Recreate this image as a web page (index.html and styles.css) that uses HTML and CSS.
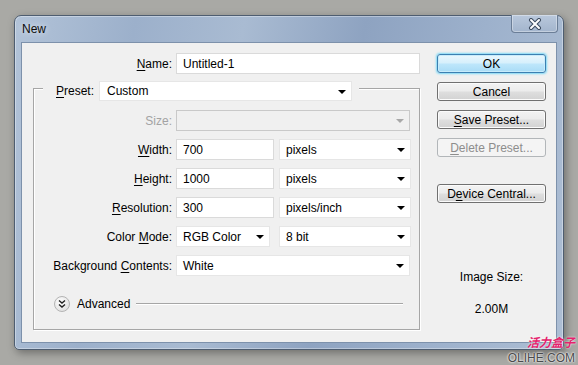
FILE: index.html
```html
<!DOCTYPE html>
<html lang="en">
<head>
  <meta charset="UTF-8">
  <title>New</title>
  <link rel="stylesheet" href="styles.css">
</head>
<body>
  <div class="window">
    <div class="titlebar">
      <span class="title">New</span>
      <div class="close">
        <svg width="14" height="12" viewBox="0 0 14 12">
          <path d="M3 2 L11 10 M11 2 L3 10" stroke="#3b4a5e" stroke-width="4" stroke-linecap="round"/>
          <path d="M3 2 L11 10 M11 2 L3 10" stroke="#ffffff" stroke-width="2" stroke-linecap="round"/>
        </svg>
      </div>
    </div>

    <div class="content">
      <div class="form">
        <div class="row name-row">
          <label class="lbl"><u>N</u>ame:</label>
          <div class="field name">Untitled-1</div>
        </div>

        <div class="group">
          <div class="preset-row">
            <label><u>P</u>reset:</label>
            <div class="select preset">Custom<i class="arrow"></i></div>
          </div>

          <div class="rows">
            <div class="row">
              <label class="lbl off">Size:</label>
              <div class="select full disabled"><i class="arrow"></i></div>
            </div>
            <div class="row">
              <label class="lbl"><u>W</u>idth:</label>
              <div class="field num">700</div>
              <div class="select unit">pixels<i class="arrow"></i></div>
            </div>
            <div class="row">
              <label class="lbl"><u>H</u>eight:</label>
              <div class="field num">1000</div>
              <div class="select unit">pixels<i class="arrow"></i></div>
            </div>
            <div class="row">
              <label class="lbl"><u>R</u>esolution:</label>
              <div class="field num">300</div>
              <div class="select unit">pixels/inch<i class="arrow"></i></div>
            </div>
            <div class="row">
              <label class="lbl">Color <u>M</u>ode:</label>
              <div class="select mode">RGB Color<i class="arrow"></i></div>
              <div class="select unit bits">8 bit<i class="arrow"></i></div>
            </div>
            <div class="row">
              <label class="lbl">Background <u>C</u>ontents:</label>
              <div class="select full">White<i class="arrow"></i></div>
            </div>
          </div>

          <div class="advanced">
            <span class="toggle">
              <svg width="16" height="16" viewBox="0 0 16 16">
                <path d="M5 4.5 L8 7 L11 4.5 M5 8.5 L8 11 L11 8.5" fill="none" stroke="#222" stroke-width="1.4"/>
              </svg>
            </span>
            <span>Advanced</span>
            <span class="rule"></span>
          </div>
        </div>
      </div>

      <div class="side">
        <div class="btn default">OK</div>
        <div class="btn">Cancel</div>
        <div class="btn"><u>S</u>ave Preset...</div>
        <div class="btn disabled"><u>D</u>elete Preset...</div>
        <div class="btn central">D<u>e</u>vice Central...</div>
        <div class="size-label">Image Size:</div>
        <div class="size-value">2.00M</div>
      </div>
    </div>
  </div>

  <div class="watermark">
    <div class="cn">活力盒子</div>
    <div class="en">OLIHE.COM</div>
  </div>
</body>
</html>
```

FILE: styles.css
```css
body {
  margin: 0;
  padding: 15px 0 0 14px;
  background: #a9a9a5;
  font-family: "Liberation Sans", Arial, sans-serif;
  font-size: 12px;
  color: #000;
  height: 365px;
  box-sizing: border-box;
  overflow: hidden;
}
u {
  text-decoration-thickness: 1px;
  text-underline-offset: 2px;
}

.window {
  width: 550px;
  height: 335px;
  box-sizing: border-box;
  border: 1px solid #4e5d70;
  border-radius: 7px 7px 5px 5px;
  background: linear-gradient(100deg, #b2c3d8 0%, #9cb0cb 20%, #a9bbd2 38%, #8ea3c1 58%, #9db1cc 78%, #adbed4 100%);
  box-shadow: 2px 3px 8px rgba(0, 0, 0, 0.35), inset 0 0 0 1px rgba(255, 255, 255, 0.35);
}
.titlebar {
  height: 26px;
  display: flex;
  justify-content: space-between;
  align-items: flex-start;
  padding: 0 5px 0 7px;
}
.title {
  margin-top: 6px;
  font-size: 12px;
  color: #0c0c0c;
  text-shadow: 0 0 6px rgba(255, 255, 255, 0.8);
}
.close {
  width: 45px;
  height: 17px;
  margin-top: -1px;
  border: 1px solid #6b7e97;
  border-top: none;
  border-radius: 0 0 4px 4px;
  background: linear-gradient(#b9c8dc, #a3b5cd);
  box-shadow: inset 0 0 0 1px rgba(255, 255, 255, 0.35);
  display: flex;
  align-items: center;
  justify-content: center;
}

.content {
  margin: 0 6px;
  height: 301px;
  box-sizing: border-box;
  border: 1px solid #7d91ab;
  background: #f0f0f0;
  display: flex;
}

.form {
  margin-left: 11px;
  width: 387px;
}
.row {
  display: flex;
  align-items: center;
  height: 21px;
}
.name-row {
  margin-top: 10px;
}
.lbl {
  width: 138px;
  text-align: right;
  margin-right: 4px;
  white-space: nowrap;
}
.name-row .lbl {
  width: 139px;
}
.lbl.off {
  color: #a3a3a3;
}

.field, .select {
  height: 21px;
  box-sizing: border-box;
  border: 1px solid #dadada;
  background: #fff;
  padding-left: 6px;
  display: flex;
  align-items: center;
  white-space: nowrap;
}
.field.name {
  width: 244px;
}
.field.num {
  width: 98px;
}
.select {
  position: relative;
  border-color: #e6e6e6;
}
.select .arrow {
  position: absolute;
  right: 5px;
  top: 8px;
  width: 0;
  height: 0;
  border-left: 4px solid transparent;
  border-right: 4px solid transparent;
  border-top: 4px solid #000;
}
.select.preset {
  width: 253px;
  height: 20px;
  padding-left: 7px;
}
.select.full {
  width: 234px;
}
.select.unit {
  width: 132px;
  margin-left: 5px;
}
.select.mode {
  width: 94px;
}
.select.bits {
  margin-left: 9px;
}
.select.disabled {
  background: #f0f0f0;
  border-color: #c9c9c9;
}
.select.disabled .arrow {
  border-top-color: #a8a8a8;
}

.group {
  margin-top: 14px;
  height: 242px;
  box-sizing: border-box;
  border: 1px solid #a6a6a6;
  box-shadow: 1px 1px 0 #fff, inset 1px 1px 0 #fff;
}
.preset-row {
  display: flex;
  width: fit-content;
  align-items: center;
  margin: -8px 0 0 9px;
  padding: 0 7px 0 13px;
  background: #f0f0f0;
  height: 20px;
}
.preset-row label {
  margin-right: 5px;
}
.rows {
  margin-top: 9px;
  display: flex;
  flex-direction: column;
  gap: 8px;
}

.advanced {
  display: flex;
  align-items: center;
  margin: 20px 16px 0 20px;
  height: 16px;
}
.toggle {
  width: 16px;
  height: 16px;
  box-sizing: border-box;
  border: 1px solid #b4b4b4;
  border-radius: 50%;
  background: radial-gradient(circle at 40% 35%, #ffffff, #e4e4e4 70%, #d2d2d2);
  margin-right: 7px;
  display: flex;
}
.toggle svg {
  margin: -1px;
}
.rule {
  flex: 1;
  margin-left: 6px;
  border-top: 1px solid #a6a6a6;
  border-bottom: 1px solid #fff;
}

.side {
  margin-left: 17px;
  width: 109px;
  padding-top: 11px;
  display: flex;
  flex-direction: column;
  gap: 9px;
}
.btn {
  height: 19px;
  box-sizing: border-box;
  border: 1px solid #707070;
  border-radius: 3px;
  background: linear-gradient(#f3f3f3 0%, #ececec 45%, #dedede 55%, #d2d2d2 100%);
  box-shadow: inset 0 0 0 1px #fbfbfb;
  display: flex;
  align-items: center;
  justify-content: center;
  white-space: nowrap;
}
.btn.default {
  border-color: #3c7fb1;
  background: linear-gradient(#ebf7fd 0%, #d7f0fc 45%, #bde6fb 55%, #a9dcf6 100%);
  box-shadow: inset 0 0 0 1px #c8ecfb, 0 0 2px 1px #7fd9f7;
}
.btn.disabled {
  border-color: #b2b6b9;
  background: #f4f4f4;
  box-shadow: none;
  color: #8d8d8d;
}
.btn.central {
  margin-top: 18px;
}
.size-label {
  margin-top: 58px;
  text-align: center;
  line-height: 14px;
}
.size-value {
  margin-top: 9px;
  text-align: center;
  line-height: 14px;
}

.watermark {
  position: absolute;
  right: 3px;
  bottom: 0;
  text-align: right;
}
.watermark .cn {
  font-family: "Noto Sans CJK SC", sans-serif;
  font-weight: bold;
  font-style: italic;
  font-size: 12px;
  line-height: 18px;
  color: #e4226c;
  text-shadow: 0 0 2px #fff;
}
.watermark .en {
  font-family: "Liberation Sans", Arial, sans-serif;
  font-size: 12px;
  line-height: 14px;
  color: #4a4a4a;
  text-shadow: 0 0 2px #fff, 0 0 2px #fff;
}
```
